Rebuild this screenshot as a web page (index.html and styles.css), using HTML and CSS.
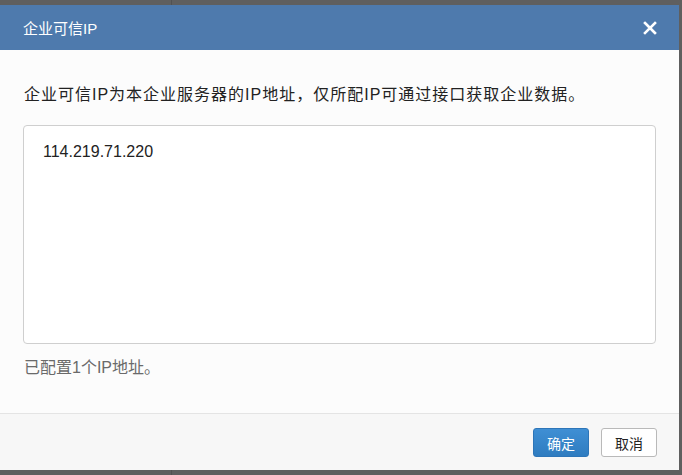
FILE: index.html
```html
<!DOCTYPE html>
<html lang="zh-CN">
  <head>
    <meta charset="UTF-8" />
    <meta name="viewport" content="width=device-width, initial-scale=1.0" />
    <title>企业可信IP</title>
    <link rel="stylesheet" href="styles.css">
  </head>

  <body>
    <div class="backdrop">
      <div class="backdrop-side"></div>
    </div>
    <div class="page">
      <div class="modal">
        <div class="modal-header">
          <span class="modal-title">企业可信IP</span>
          <button type="button" class="close" aria-label="关闭">
            <svg width="14" height="14" viewBox="0 0 14 14">
              <path d="M2 2 L12 12 M12 2 L2 12" stroke="#fff" stroke-width="2.6" stroke-linecap="square" fill="none" />
            </svg>
          </button>
        </div>
        <div class="modal-body">
          <p class="desc">企业可信IP为本企业服务器的IP地址，仅所配IP可通过接口获取企业数据。</p>
          <div class="ip-box">114.219.71.220</div>
          <p class="count">已配置1个IP地址。</p>
        </div>
        <div class="modal-footer">
          <button type="button" class="btn btn-primary">确定</button>
          <button type="button" class="btn">取消</button>
        </div>
      </div>
    </div>
  </body>
</html>
```

FILE: styles.css
```css
html,
body {
  margin: 0;
  height: 100%;
}

body {
  background: #5f5f5f;
  font-family: "Liberation Sans", "Noto Sans CJK SC", sans-serif;
  color: #333;
  overflow: hidden;
}

.backdrop {
  position: fixed;
  inset: 0;
  display: flex;
}

.backdrop-side {
  width: 171px;
  border-right: 1px solid #525252;
}

.page {
  position: relative;
  padding-top: 5px;
}

.modal {
  width: 679px;
  height: 465px;
  background: #fcfcfc;
  display: flex;
  flex-direction: column;
}

.modal-header {
  height: 45px;
  background: #4e7aad;
  display: flex;
  align-items: center;
  justify-content: space-between;
  padding: 0 22px 0 23px;
}

.modal-title {
  color: #fff;
  font-size: 15px;
}

.close {
  background: none;
  border: none;
  padding: 0;
  width: 14px;
  height: 14px;
  display: flex;
}

.modal-body {
  flex: 1;
  padding: 35px 23px 0 23px;
}

.desc {
  margin: 0 0 20px 1px;
  font-size: 16px;
  letter-spacing: 1px;
  line-height: 20px;
  color: #222;
}

.ip-box {
  height: 185px;
  border: 1px solid #cfcfcf;
  border-radius: 4px;
  background: #fff;
  padding: 16px 19px;
  font-size: 16px;
  line-height: 20px;
  color: #222;
}

.count {
  margin: 14px 0 0 1px;
  font-size: 16px;
  line-height: 20px;
  color: #6a6a6a;
}

.modal-footer {
  height: 57px;
  box-sizing: border-box;
  border-top: 1px solid #e4e4e4;
  background: #f7f7f7;
  display: flex;
  justify-content: flex-end;
  align-items: flex-start;
  gap: 12px;
  padding: 14px 22px 0 0;
}

.btn {
  width: 56px;
  height: 29px;
  border: 1px solid #b9b9b9;
  border-radius: 3px;
  background: #fff;
  font-family: inherit;
  font-size: 14px;
  color: #222;
  padding: 0;
}

.btn-primary {
  background: linear-gradient(#3f8fd4, #2f7cc0);
  border-color: #2d75b8;
  color: #fff;
}
```
